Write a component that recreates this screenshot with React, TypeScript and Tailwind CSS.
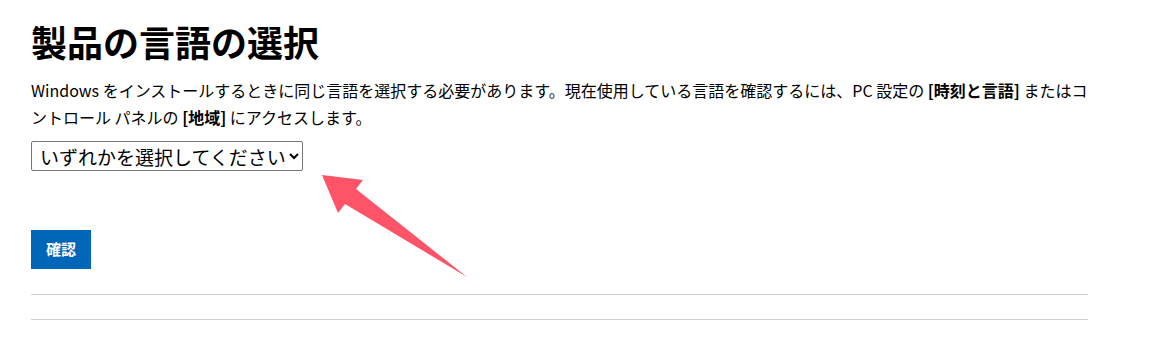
import React from 'react'

export default function App(){
    return (
        <div className="relative w-[1168px] h-[341px] bg-white text-black overflow-hidden" style={{fontFamily:'"Segoe UI","Noto Sans CJK JP","Noto Sans",sans-serif'}}>
            <div className="pl-[31px] pr-[80px] pt-[17px]">
                <h1 className="text-[36px] font-bold leading-[48px]">製品の言語の選択</h1>
                <p className="mt-[12px] text-[16px] leading-[27px] w-[1058px]">
                    Windows をインストールするときに同じ言語を選択する必要があります。現在使用している言語を確認するには、PC 設定の <b>[時刻と言語]</b> またはコントロール パネルの <b>[地域]</b> にアクセスします。
                </p>
                <div className="mt-[10px]">
                    <select className="h-[30px] w-[272px] border border-[#767676] rounded-[2px] text-[19px] pl-[4px] bg-white text-black">
                        <option>いずれかを選択してください</option>
                    </select>
                </div>
                <button className="block mt-[59px] w-[60px] h-[39px] bg-[#0067b8] text-white text-[15px] font-bold">確認</button>
                <div className="mt-[25px] w-[1057px] border-t border-[#d2d2d2]"></div>
                <div className="mt-[24px] w-[1057px] border-t border-[#d2d2d2]"></div>
            </div>
            {/* annotation arrow */}
            <svg className="absolute left-0 top-0" width="1168" height="341">
                <polygon points="322,175 363,180 356,189 467,277 345,204 338,213" fill="#ff5468"/>
            </svg>
        </div>
    )
}
